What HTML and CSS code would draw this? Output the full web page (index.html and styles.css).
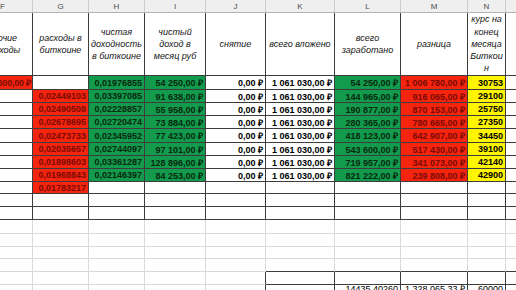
FILE: index.html
```html
<!DOCTYPE html>
<html lang="ru">
<head>
<meta charset="utf-8">
<title>Биткоин</title>
<link rel="stylesheet" href="styles.css">
</head>
<body>
<div class="sheet">
  <div class="h">F</div><div class="h">G</div><div class="h">H</div><div class="h">I</div><div class="h">J</div><div class="h">K</div><div class="h">L</div><div class="h">M</div><div class="h">N</div><div class="h">O</div>

  <div class="t">прочие<br>расходы</div>
  <div class="t">расходы в<br>биткоине</div>
  <div class="t">чистая<br>доходность<br>в биткоине</div>
  <div class="t">чистый<br>доход в<br>месяц руб</div>
  <div class="t">снятие</div>
  <div class="t">всего вложено</div>
  <div class="t">всего<br>заработано</div>
  <div class="t">разница</div>
  <div class="t">курс на<br>конец<br>месяца<br>Биткои<br>н</div>
  <div class="t"></div>

  <div class="c b r f">600,00 ₽</div><div class="c b"></div><div class="c b g">0,01976855</div><div class="c b g">54 250,00 ₽</div><div class="c b">0,00 ₽</div><div class="c b">1 061 030,00 ₽</div><div class="c b g">54 250,00 ₽</div><div class="c b r">1 006 780,00 ₽</div><div class="c b y">30753</div><div class="c b"></div>

  <div class="c b"></div><div class="c b r">0,02449103</div><div class="c b g">0,03397085</div><div class="c b g">91 638,00 ₽</div><div class="c b">0,00 ₽</div><div class="c b">1 061 030,00 ₽</div><div class="c b g">144 965,00 ₽</div><div class="c b r">916 065,00 ₽</div><div class="c b y">29100</div><div class="c b"></div>

  <div class="c b"></div><div class="c b r">0,02490508</div><div class="c b g">0,02228857</div><div class="c b g">55 958,00 ₽</div><div class="c b">0,00 ₽</div><div class="c b">1 061 030,00 ₽</div><div class="c b g">190 877,00 ₽</div><div class="c b r">870 153,00 ₽</div><div class="c b y">25750</div><div class="c b"></div>

  <div class="c b"></div><div class="c b r">0,02678695</div><div class="c b g">0,02720474</div><div class="c b g">73 884,00 ₽</div><div class="c b">0,00 ₽</div><div class="c b">1 061 030,00 ₽</div><div class="c b g">280 365,00 ₽</div><div class="c b r">780 665,00 ₽</div><div class="c b y">27350</div><div class="c b"></div>

  <div class="c b"></div><div class="c b r">0,02473733</div><div class="c b g">0,02345952</div><div class="c b g">77 423,00 ₽</div><div class="c b">0,00 ₽</div><div class="c b">1 061 030,00 ₽</div><div class="c b g">418 123,00 ₽</div><div class="c b r">642 907,00 ₽</div><div class="c b y">34450</div><div class="c b"></div>

  <div class="c b"></div><div class="c b r">0,02035657</div><div class="c b g">0,02744097</div><div class="c b g">97 101,00 ₽</div><div class="c b">0,00 ₽</div><div class="c b">1 061 030,00 ₽</div><div class="c b g">543 600,00 ₽</div><div class="c b r">517 430,00 ₽</div><div class="c b y">39100</div><div class="c b"></div>

  <div class="c b"></div><div class="c b r">0,01898603</div><div class="c b g">0,03361287</div><div class="c b g">128 896,00 ₽</div><div class="c b">0,00 ₽</div><div class="c b">1 061 030,00 ₽</div><div class="c b g">719 957,00 ₽</div><div class="c b r">341 073,00 ₽</div><div class="c b y">42140</div><div class="c b"></div>

  <div class="c b"></div><div class="c b r">0,01968843</div><div class="c b g">0,02146397</div><div class="c b g">84 253,00 ₽</div><div class="c b">0,00 ₽</div><div class="c b">1 061 030,00 ₽</div><div class="c b g">821 222,00 ₽</div><div class="c b r">239 808,00 ₽</div><div class="c b y">42900</div><div class="c b"></div>

  <div class="c b"></div><div class="c b r">0,01783217</div><div class="c b"></div><div class="c b"></div><div class="c b"></div><div class="c b"></div><div class="c b"></div><div class="c b"></div><div class="c b"></div><div class="c b"></div>

  <div class="c b"></div><div class="c b"></div><div class="c b"></div><div class="c b"></div><div class="c b"></div><div class="c b"></div><div class="c b"></div><div class="c b"></div><div class="c b"></div><div class="c b"></div>

  <div class="c b"></div><div class="c b"></div><div class="c b"></div><div class="c b"></div><div class="c b"></div><div class="c b"></div><div class="c b"></div><div class="c b"></div><div class="c b"></div><div class="c b"></div>

  <div class="c"></div><div class="c"></div><div class="c"></div><div class="c"></div><div class="c"></div><div class="c"></div><div class="c"></div><div class="c"></div><div class="c"></div><div class="c"></div>

  <div class="c"></div><div class="c"></div><div class="c"></div><div class="c"></div><div class="c"></div><div class="c"></div><div class="c"></div><div class="c"></div><div class="c"></div><div class="c"></div>

  <div class="c"></div><div class="c"></div><div class="c"></div><div class="c"></div><div class="c"></div><div class="c"></div><div class="c"></div><div class="c"></div><div class="c"></div><div class="c"></div>

  <div class="c"></div><div class="c"></div><div class="c"></div><div class="c"></div><div class="c"></div><div class="c bb"></div><div class="c bb"></div><div class="c bb"></div><div class="c bb"></div><div class="c bb"></div>

  <div class="c"></div><div class="c"></div><div class="c"></div><div class="c"></div><div class="c br"></div><div class="c b"></div><div class="c b"></div><div class="c b"></div><div class="c b"></div><div class="c b"></div>

  <div class="c"></div><div class="c"></div><div class="c"></div><div class="c"></div><div class="c br"></div><div class="c b"></div><div class="c b n top">14435,40260</div><div class="c b n top">1 328 065,33 ₽</div><div class="c b n top">60000</div><div class="c b"></div>
</div>
</body>
</html>
```

FILE: styles.css
```css
html, body {
  margin: 0;
  padding: 0;
  background: #ffffff;
}

body {
  width: 516px;
  height: 290px;
  overflow: hidden;
  font-family: "Liberation Sans", Arial, sans-serif;
}

.sheet {
  display: grid;
  grid-template-columns: 60px 56px 56px 61px 60px 69px 66px 67px 38px 64px;
  grid-template-rows: 13px 63px 14px 13px 13px 13px 14px 13px 13px 13px 12px 13px 13px 14px 13px 12px 13px 13px 13px;
  width: 597px;
  margin-left: -27px;
}

.h {
  box-sizing: border-box;
  background: #efefef;
  border-right: 1px solid #cdcdcd;
  border-bottom: 1px solid #b3b3b3;
  font-size: 8px;
  color: #4a4a4a;
  display: flex;
  align-items: center;
  justify-content: center;
}

.t {
  box-sizing: border-box;
  border-right: 1px solid #3c3c3c;
  border-bottom: 1px solid #3c3c3c;
  font-style: italic;
  font-size: 9px;
  line-height: 12.3px;
  color: #151515;
  text-align: center;
  display: flex;
  align-items: center;
  justify-content: center;
}

.c {
  box-sizing: border-box;
  border-right: 1px solid #d9d9d9;
  border-bottom: 1px solid #d9d9d9;
  display: flex;
  align-items: center;
  justify-content: flex-end;
  padding-right: 2px;
  font-size: 9px;
  font-weight: bold;
  color: #000;
  white-space: nowrap;
  overflow: hidden;
}

.b {
  border-right-color: #3c3c3c;
  border-bottom-color: #3c3c3c;
}

.bb {
  border-bottom-color: #3c3c3c;
}

.br {
  border-right-color: #3c3c3c;
}

.r {
  background: #f5240e;
  color: #7a0a03;
}

.g {
  background: #129b4c;
  color: #08280f;
}

.y {
  background: #fff500;
  color: #000;
}

.f {
  letter-spacing: -0.2px;
  padding-right: 1px;
}

.n {
  font-weight: normal;
}

.top {
  align-items: flex-start;
  line-height: 9px;
  padding-top: 0;
}
```
